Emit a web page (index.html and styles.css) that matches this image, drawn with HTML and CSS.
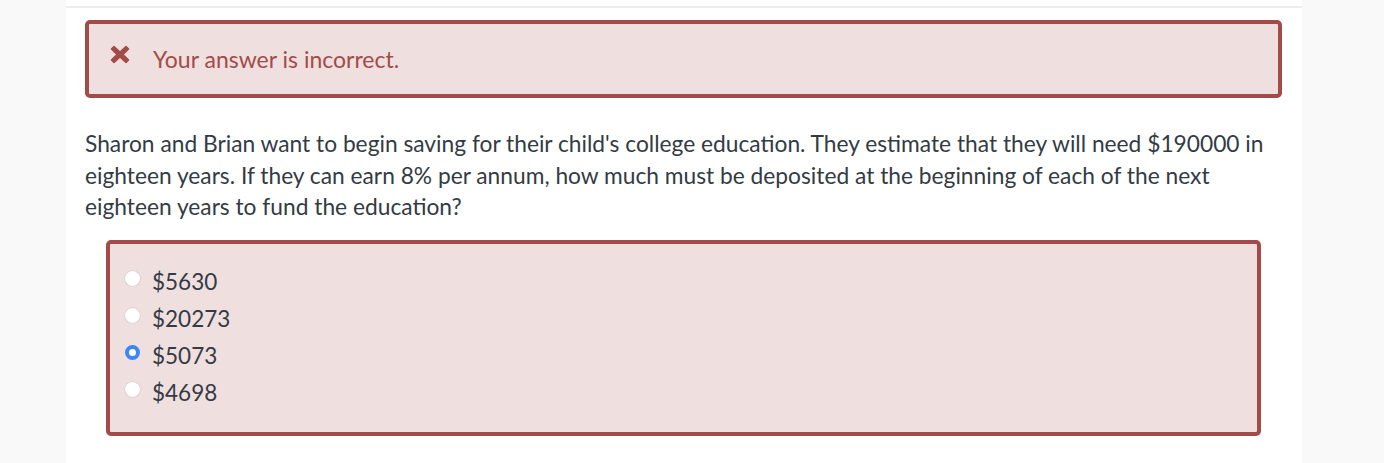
FILE: index.html
```html
<!DOCTYPE html>
<html lang="en">
<head>
<meta charset="utf-8">
<title>Question</title>
<link rel="stylesheet" href="styles.css">
</head>
<body>
<div class="panel">
  <div class="topline"></div>
  <div class="alert">
    <svg class="alert-icon" viewBox="0 0 20 19" width="20" height="19" aria-hidden="true">
      <path d="M1.5 4 L4 1.5 L10 7 L16 1.5 L18.5 4 L13 9.5 L18.5 15 L16 17.5 L10 12 L4 17.5 L1.5 15 L7 9.5 Z" fill="#a34b48" stroke="#a34b48" stroke-width="1.6" stroke-linejoin="round"/>
    </svg>
    <span class="alert-text">Your answer is incorrect.</span>
  </div>
  <p class="question">Sharon and Brian want to begin saving for their child's college education. They estimate that they will need $190000 in eighteen years. If they can earn 8% per annum, how much must be deposited at the beginning of each of the next eighteen years to fund the education?</p>
  <div class="options">
    <label class="option"><input type="radio" name="a" class="radio"><span>$5630</span></label>
    <label class="option"><input type="radio" name="a" class="radio"><span>$20273</span></label>
    <label class="option"><input type="radio" name="a" class="radio" checked><span>$5073</span></label>
    <label class="option"><input type="radio" name="a" class="radio"><span>$4698</span></label>
  </div>
</div>
</body>
</html>
```
FILE: styles.css
```css
html, body {
  margin: 0;
  padding: 0;
}
body {
  background: #f9f9f9;
  font-family: Lato, "Open Sans", sans-serif;
}
.panel {
  margin-left: 66px;
  width: 1236px;
  min-height: 463px;
  background: #ffffff;
  padding: 6px 20px 0 19px;
  box-sizing: border-box;
}
.topline {
  height: 2px;
  background: #ececec;
  margin: 0 -20px 0 -19px;
}
.alert {
  margin-top: 12px;
  height: 78px;
  box-sizing: border-box;
  border: 4px solid #a34b48;
  border-radius: 5px;
  background: #f0dfdf;
  display: flex;
  align-items: center;
  padding-left: 21px;
}
.alert-icon {
  margin-top: -9px;
  flex: none;
}
.alert-text {
  margin-left: 23px;
  margin-top: -1px;
  color: #a34b48;
  font-size: 23px;
}
.question {
  margin: 30px 0 0;
  font-size: 22.75px;
  line-height: 31.5px;
  color: #333b44;
}
.options {
  margin: 17px 21px 0;
  height: 196px;
  box-sizing: border-box;
  border: 4px solid #a34b48;
  border-radius: 5px;
  background: #f0dfdf;
  padding: 19px 15px 0;
  display: flex;
  flex-direction: column;
}
.option {
  display: flex;
  align-items: center;
  height: 37px;
  font-size: 22.5px;
  color: #333b44;
}
.radio {
  appearance: none;
  -webkit-appearance: none;
  width: 15px;
  height: 15px;
  margin: 0 12px 0 0;
  border-radius: 50%;
  background: #ffffff;
  box-shadow: 0 0 1px 0.5px rgba(0,0,0,0.12);
  position: relative;
  top: -3px;
}
.radio:checked {
  background: #ffffff;
  border: 4.5px solid #3d86f5;
  box-sizing: border-box;
  box-shadow: none;
}
```
